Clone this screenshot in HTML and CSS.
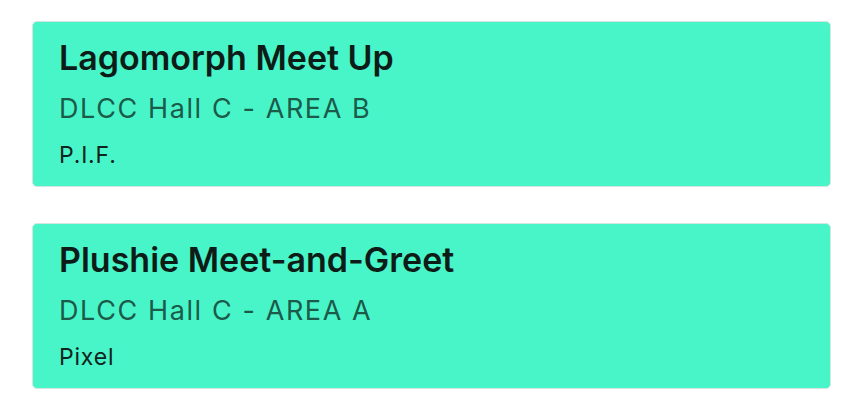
FILE: index.html
```html
<!DOCTYPE html>
<html>
<head>
<meta charset="utf-8">
<link rel="stylesheet" href="styles.css">
</head>
<body>
<div class="list">
  <div class="card">
    <div class="title">Lagomorph Meet Up</div>
    <div class="location">DLCC Hall C - AREA B</div>
    <div class="host">P.I.F.</div>
  </div>
  <div class="card">
    <div class="title">Plushie Meet-and-Greet</div>
    <div class="location">DLCC Hall C - AREA A</div>
    <div class="host">Pixel</div>
  </div>
</div>
</body>
</html>
```
FILE: styles.css
```css
html, body {
  margin: 0;
  padding: 0;
  background: #ffffff;
}
body {
  font-family: Inter, "Noto Sans", sans-serif;
}
.list {
  display: flex;
  flex-direction: column;
  gap: 36px;
  padding: 21px 32px 0 32px;
}
.card {
  background: #48f5c8;
  border: 1px solid #d3e6df;
  border-radius: 5px;
  padding: 15px 26px 0 26px;
  height: 166px;
  box-sizing: border-box;
}
.title {
  font-size: 34px;
  font-weight: 600;
  color: #0e1c18;
  line-height: 42px;
  letter-spacing: 0;
}
.location {
  font-size: 27px;
  font-weight: 400;
  color: #1c5a4a;
  line-height: 32px;
  margin-top: 14px;
  letter-spacing: 1.6px;
}
.host {
  font-size: 23px;
  color: #10231d;
  line-height: 28px;
  margin-top: 16px;
  letter-spacing: 0.8px;
}
```
